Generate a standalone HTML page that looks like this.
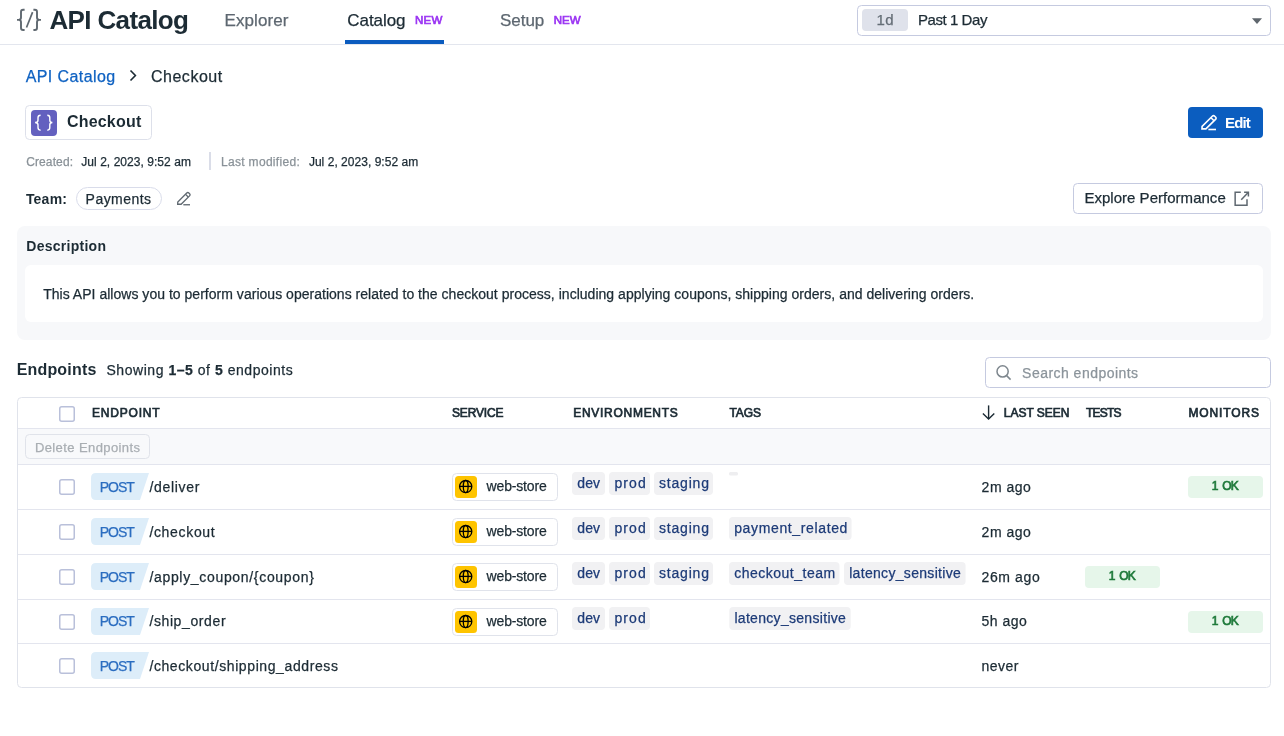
<!DOCTYPE html>
<html><head><meta charset="utf-8"><title>API Catalog - Checkout</title>
<style>
html,body{margin:0;padding:0;background:#fff;width:1284px;height:736px;overflow:hidden}
svg{display:block;font-family:"Liberation Sans",sans-serif;will-change:transform}
</style></head><body>
<svg width="1284" height="736" viewBox="0 0 1284 736">
<rect x="0" y="44" width="1284" height="1" fill="#e3e6ee"/>
<rect x="345" y="40" width="99" height="4" fill="#0b5cbf"/>
<g transform="translate(14,6)" fill="none" stroke="#5f6870" stroke-width="1.9" stroke-linecap="butt"><path d="M10.6,3.8 H9.1 C7.8,3.8 7,4.6 7,5.9 V11.6 C7,13.1 6.1,13.9 4.6,13.9 H3 M4.6,13.9 C6.1,13.9 7,14.7 7,16.2 V21.9 C7,23.2 7.8,24 9.1,24 H10.6"/><path d="M19.4,3.8 H20.9 C22.2,3.8 23,4.6 23,5.9 V11.6 C23,13.1 23.9,13.9 25.4,13.9 H27 M25.4,13.9 C23.9,13.9 23,14.7 23,16.2 V21.9 C23,23.2 22.2,24 20.9,24 H19.4"/><path d="M18.6,6.1 L12.5,21.5" stroke-width="1.7"/></g>
<rect x="857.5" y="5.5" width="413" height="30" rx="4" fill="#fff" stroke="#c5cae0"/>
<rect x="862" y="9" width="46" height="22" rx="4" fill="#dfe2eb"/>
<polygon points="1252,18.3 1262,18.3 1257,23.9" fill="#5f666d"/>
<polyline points="130.5,70.5 135.4,75.5 130.5,80.5" fill="none" stroke="#1c2b34" stroke-width="1.6"/>
<rect x="25.5" y="105.5" width="126" height="34" rx="4" fill="#fff" stroke="#dde0ea"/>
<rect x="31" y="110" width="26" height="26" rx="4" fill="#6360bf"/>
<g transform="translate(29,108)" fill="none" stroke="#fff" stroke-width="1.4"><path d="M11.6,7.3 C10,7.3 9,8.2 9,9.8 V12.2 C9,13.6 8,14.5 6.1,14.5 C8,14.5 9,15.4 9,16.8 V19.6 C9,21.2 10,22.2 11.6,22.2"/><path d="M18.3,7.3 C19.9,7.3 20.8,8.2 20.8,9.8 V12.2 C20.8,13.6 21.8,14.5 23.4,14.5 C21.8,14.5 20.8,15.4 20.8,16.8 V19.6 C20.8,21.2 19.9,22.2 18.3,22.2"/></g>
<rect x="1188" y="107" width="75" height="31" rx="4" fill="#0b5dbf"/>
<g transform="translate(1196,110) scale(1)" fill="none" stroke="#fff" stroke-width="1.6" stroke-linejoin="miter"><path d="M6,18.9 L6.1,16.4 L16.3,6.2 Q17.5,5 18.7,6.2 L19.5,7 Q20.7,8.2 19.5,9.4 L9.9,18.9 Z"/><path d="M15,7.7 L18,10.7"/><path d="M12.4,19.5 H20"/></g>
<rect x="209" y="152" width="2" height="18" fill="#dadde8"/>
<rect x="76.5" y="187.5" width="85" height="22" rx="11" fill="#fff" stroke="#d9dcea"/>
<g transform="translate(172.4,187.6) scale(0.88)" fill="none" stroke="#5f6870" stroke-width="1.5" stroke-linejoin="miter"><path d="M6,18.9 L6.1,16.4 L16.3,6.2 Q17.5,5 18.7,6.2 L19.5,7 Q20.7,8.2 19.5,9.4 L9.9,18.9 Z"/><path d="M15,7.7 L18,10.7"/><path d="M12.4,19.5 H20"/></g>
<rect x="1073.5" y="183.5" width="189" height="30" rx="4" fill="#fff" stroke="#c5cae0"/>
<g transform="translate(1230,187)" fill="none" stroke="#5f6870" stroke-width="1.5"><path d="M10.8,5.15 H5.15 V18.3 H17 V12.2"/><path d="M11.25,12.65 L18.2,5.4"/><path d="M14.1,5.15 H18.4 V9.4"/></g>
<rect x="17" y="226" width="1254" height="114" rx="8" fill="#f7f8fa"/>
<rect x="25" y="265" width="1238" height="57" rx="6" fill="#fff"/>
<rect x="985.5" y="357.5" width="285" height="30" rx="4" fill="#fff" stroke="#c5cae0"/>
<g transform="translate(992,361)" fill="none" stroke="#7e878e" stroke-width="1.5"><circle cx="10.6" cy="10.4" r="5.6"/><path d="M14.6,14.6 L18.6,18.6"/></g>
<rect x="17.5" y="397.5" width="1253" height="290" rx="4" fill="#fff" stroke="#e0e3eb"/>
<rect x="18" y="429" width="1252" height="35" fill="#f8f9fb"/>
<rect x="18" y="428" width="1252" height="1" fill="#e3e5ee"/>
<rect x="18" y="464" width="1252" height="1" fill="#e3e5ee"/>
<rect x="18" y="509" width="1252" height="1" fill="#e3e5ee"/>
<rect x="18" y="554" width="1252" height="1" fill="#e3e5ee"/>
<rect x="18" y="599" width="1252" height="1" fill="#e3e5ee"/>
<rect x="18" y="643" width="1252" height="1" fill="#e3e5ee"/>
<rect x="59.75" y="406.75" width="14.5" height="14.5" rx="2" fill="#fff" stroke="#b9c0da" stroke-width="1.5"/>
<rect x="25.5" y="434.5" width="124" height="24" rx="4" fill="#f8f9fb" stroke="#e0e3ea"/>
<g transform="translate(978,402)" fill="none" stroke="#1c2b34" stroke-width="1.4"><path d="M10.6,3.4 V17"/><path d="M4.9,11.4 L10.6,17.1 L16.3,11.4"/></g>
<rect x="59.75" y="479.75" width="14.5" height="14.5" rx="2" fill="#fff" stroke="#b9c0da" stroke-width="1.5"/>
<path d="M96,473 H149 L140,500 H96 Q91,500 91,495 V478 Q91,473 96,473 Z" fill="#ddedf9"/>
<rect x="452.5" y="473.5" width="105" height="27" rx="4" fill="#fff" stroke="#e0e3eb"/>
<rect x="455" y="476" width="22" height="22" rx="3.5" fill="#fec400"/>
<g fill="none" stroke="#000" stroke-width="1.3"><circle cx="465.7" cy="486.6" r="6.1"/><path d="M459.59999999999997,486.40000000000003 H471.8"/><ellipse cx="465.7" cy="486.6" rx="2.4" ry="6.1"/></g>
<rect x="572" y="472" width="33" height="23" rx="4" fill="#f1f1f3"/>
<rect x="609" y="472" width="41" height="23" rx="4" fill="#f1f1f3"/>
<rect x="654" y="472" width="59" height="23" rx="4" fill="#f1f1f3"/>
<rect x="729" y="472" width="9" height="3.5" rx="1.5" fill="#eeeef0"/>
<rect x="1188" y="476" width="75" height="22" rx="4" fill="#e6f6ea"/>
<rect x="59.75" y="524.75" width="14.5" height="14.5" rx="2" fill="#fff" stroke="#b9c0da" stroke-width="1.5"/>
<path d="M96,518 H149 L140,545 H96 Q91,545 91,540 V523 Q91,518 96,518 Z" fill="#ddedf9"/>
<rect x="452.5" y="518.5" width="105" height="27" rx="4" fill="#fff" stroke="#e0e3eb"/>
<rect x="455" y="521" width="22" height="22" rx="3.5" fill="#fec400"/>
<g fill="none" stroke="#000" stroke-width="1.3"><circle cx="465.7" cy="531.6" r="6.1"/><path d="M459.59999999999997,531.4 H471.8"/><ellipse cx="465.7" cy="531.6" rx="2.4" ry="6.1"/></g>
<rect x="572" y="517" width="33" height="23" rx="4" fill="#f1f1f3"/>
<rect x="609" y="517" width="41" height="23" rx="4" fill="#f1f1f3"/>
<rect x="654" y="517" width="59" height="23" rx="4" fill="#f1f1f3"/>
<rect x="729" y="517" width="122.6" height="23" rx="4" fill="#f1f1f3"/>
<rect x="59.75" y="569.75" width="14.5" height="14.5" rx="2" fill="#fff" stroke="#b9c0da" stroke-width="1.5"/>
<path d="M96,563 H149 L140,590 H96 Q91,590 91,585 V568 Q91,563 96,563 Z" fill="#ddedf9"/>
<rect x="452.5" y="563.5" width="105" height="27" rx="4" fill="#fff" stroke="#e0e3eb"/>
<rect x="455" y="566" width="22" height="22" rx="3.5" fill="#fec400"/>
<g fill="none" stroke="#000" stroke-width="1.3"><circle cx="465.7" cy="576.6" r="6.1"/><path d="M459.59999999999997,576.4 H471.8"/><ellipse cx="465.7" cy="576.6" rx="2.4" ry="6.1"/></g>
<rect x="572" y="562" width="33" height="23" rx="4" fill="#f1f1f3"/>
<rect x="609" y="562" width="41" height="23" rx="4" fill="#f1f1f3"/>
<rect x="654" y="562" width="59" height="23" rx="4" fill="#f1f1f3"/>
<rect x="729" y="562" width="110.5" height="23" rx="4" fill="#f1f1f3"/>
<rect x="844" y="562" width="121.6" height="23" rx="4" fill="#f1f1f3"/>
<rect x="1085" y="566" width="75" height="22" rx="4" fill="#e6f6ea"/>
<rect x="59.75" y="614.75" width="14.5" height="14.5" rx="2" fill="#fff" stroke="#b9c0da" stroke-width="1.5"/>
<path d="M96,608 H149 L140,635 H96 Q91,635 91,630 V613 Q91,608 96,608 Z" fill="#ddedf9"/>
<rect x="452.5" y="608.5" width="105" height="27" rx="4" fill="#fff" stroke="#e0e3eb"/>
<rect x="455" y="611" width="22" height="22" rx="3.5" fill="#fec400"/>
<g fill="none" stroke="#000" stroke-width="1.3"><circle cx="465.7" cy="621.6" r="6.1"/><path d="M459.59999999999997,621.4 H471.8"/><ellipse cx="465.7" cy="621.6" rx="2.4" ry="6.1"/></g>
<rect x="572" y="607" width="33" height="23" rx="4" fill="#f1f1f3"/>
<rect x="609" y="607" width="41" height="23" rx="4" fill="#f1f1f3"/>
<rect x="729.3" y="607" width="121.4" height="23" rx="4" fill="#f1f1f3"/>
<rect x="1188" y="611" width="75" height="22" rx="4" fill="#e6f6ea"/>
<rect x="59.75" y="658.75" width="14.5" height="14.5" rx="2" fill="#fff" stroke="#b9c0da" stroke-width="1.5"/>
<path d="M96,652 H149 L140,679 H96 Q91,679 91,674 V657 Q91,652 96,652 Z" fill="#ddedf9"/>
<text x="49.40" y="28.9" font-size="26" fill="#1c2b34" letter-spacing="-0.633"><tspan font-weight="bold">API Catalog</tspan></text>
<text x="224.50" y="26" font-size="17" fill="#5d6770" stroke="#5d6770" stroke-width="0.25" letter-spacing="0.080"><tspan>Explorer</tspan></text>
<text x="347.30" y="26" font-size="17" fill="#1c2b34" stroke="#1c2b34" stroke-width="0.25" letter-spacing="-0.057"><tspan>Catalog</tspan></text>
<text x="415.00" y="24" font-size="11.5" fill="#9b35f3" stroke="#9b35f3" stroke-width="0.7" letter-spacing="0.212"><tspan>NEW</tspan></text>
<text x="500.10" y="26" font-size="17" fill="#5d6770" stroke="#5d6770" stroke-width="0.25" letter-spacing="-0.068"><tspan>Setup</tspan></text>
<text x="553.80" y="24" font-size="11.5" fill="#9b35f3" stroke="#9b35f3" stroke-width="0.7" letter-spacing="0.012"><tspan>NEW</tspan></text>
<text x="876.50" y="25" font-size="15" fill="#646d76" stroke="#646d76" stroke-width="0.25" letter-spacing="0.358"><tspan>1d</tspan></text>
<text x="917.90" y="25" font-size="15" fill="#1c2b34" stroke="#1c2b34" stroke-width="0.25" letter-spacing="-0.430"><tspan>Past 1 Day</tspan></text>
<text x="25.70" y="82" font-size="16" fill="#0f62c2" stroke="#0f62c2" stroke-width="0.25" letter-spacing="0.402"><tspan>API Catalog</tspan></text>
<text x="151.00" y="82" font-size="16" fill="#1c2b34" stroke="#1c2b34" stroke-width="0.25" letter-spacing="0.507"><tspan>Checkout</tspan></text>
<text x="66.90" y="127.3" font-size="16" fill="#1c2b34" letter-spacing="0.204"><tspan font-weight="bold">Checkout</tspan></text>
<text x="1225.00" y="128" font-size="15" fill="#ffffff" letter-spacing="-0.878"><tspan font-weight="bold">Edit</tspan></text>
<text x="26.20" y="166" font-size="12" fill="#8a9298" stroke="#8a9298" stroke-width="0.25" letter-spacing="0.116"><tspan>Created:</tspan></text>
<text x="81.30" y="166" font-size="12" fill="#1c2b34" stroke="#1c2b34" stroke-width="0.25" letter-spacing="0.045"><tspan>Jul 2, 2023, 9:52 am</tspan></text>
<text x="221.10" y="166" font-size="12" fill="#8a9298" stroke="#8a9298" stroke-width="0.25" letter-spacing="0.302"><tspan>Last modified:</tspan></text>
<text x="308.90" y="166" font-size="12" fill="#1c2b34" stroke="#1c2b34" stroke-width="0.25" letter-spacing="0.029"><tspan>Jul 2, 2023, 9:52 am</tspan></text>
<text x="25.90" y="204" font-size="14" fill="#1c2b34" letter-spacing="0.217"><tspan font-weight="bold">Team:</tspan></text>
<text x="85.60" y="204" font-size="14" fill="#1c2b34" stroke="#1c2b34" stroke-width="0.25" letter-spacing="0.465"><tspan>Payments</tspan></text>
<text x="1084.40" y="203.3" font-size="15" fill="#1c2b34" stroke="#1c2b34" stroke-width="0.25" letter-spacing="0.025"><tspan>Explore Performance</tspan></text>
<text x="26.30" y="251.3" font-size="14" fill="#1c2b34" letter-spacing="0.264"><tspan font-weight="bold">Description</tspan></text>
<text x="43.20" y="299" font-size="14" fill="#1c2b34" stroke="#1c2b34" stroke-width="0.25" letter-spacing="0.023"><tspan>This API allows you to perform various operations related to the checkout process, including applying coupons, shipping orders, and delivering orders.</tspan></text>
<text x="16.70" y="374.5" font-size="16" fill="#1c2b34" letter-spacing="0.173"><tspan font-weight="bold">Endpoints</tspan></text>
<text x="106.50" y="374.5" font-size="14" fill="#1c2b34" stroke="#1c2b34" stroke-width="0.25" letter-spacing="0.536"><tspan>Showing </tspan><tspan font-weight="bold">1–5</tspan><tspan> of </tspan><tspan font-weight="bold">5</tspan><tspan> endpoints</tspan></text>
<text x="1022.10" y="378" font-size="14" fill="#8b949b" stroke="#8b949b" stroke-width="0.25" letter-spacing="0.469"><tspan>Search endpoints</tspan></text>
<text x="92.10" y="417" font-size="12" fill="#1c2b34" stroke="#1c2b34" stroke-width="0.7" letter-spacing="0.775"><tspan>ENDPOINT</tspan></text>
<text x="451.90" y="417" font-size="12" fill="#1c2b34" stroke="#1c2b34" stroke-width="0.7" letter-spacing="-0.127"><tspan>SERVICE</tspan></text>
<text x="573.20" y="417" font-size="12" fill="#1c2b34" stroke="#1c2b34" stroke-width="0.7" letter-spacing="0.721"><tspan>ENVIRONMENTS</tspan></text>
<text x="729.50" y="417" font-size="12" fill="#1c2b34" stroke="#1c2b34" stroke-width="0.7" letter-spacing="-0.092"><tspan>TAGS</tspan></text>
<text x="1003.80" y="417" font-size="12" fill="#1c2b34" stroke="#1c2b34" stroke-width="0.7" letter-spacing="-0.020"><tspan>LAST SEEN</tspan></text>
<text x="1085.90" y="417" font-size="12" fill="#1c2b34" stroke="#1c2b34" stroke-width="0.7" letter-spacing="-0.742"><tspan>TESTS</tspan></text>
<text x="1188.50" y="417" font-size="12" fill="#1c2b34" stroke="#1c2b34" stroke-width="0.7" letter-spacing="0.865"><tspan>MONITORS</tspan></text>
<text x="34.90" y="452" font-size="13" fill="#a9aeb3" stroke="#a9aeb3" stroke-width="0.25" letter-spacing="0.406"><tspan>Delete Endpoints</tspan></text>
<text x="99.70" y="492" font-size="14" fill="#2b6dc0" stroke="#2b6dc0" stroke-width="0.25" letter-spacing="-0.988"><tspan>POST</tspan></text>
<text x="149.40" y="492" font-size="14" fill="#1c2b34" stroke="#1c2b34" stroke-width="0.25" letter-spacing="0.690"><tspan>/deliver</tspan></text>
<text x="981.60" y="492" font-size="14" fill="#1c2b34" stroke="#1c2b34" stroke-width="0.25" letter-spacing="0.498"><tspan>2m ago</tspan></text>
<text x="486.60" y="491" font-size="14" fill="#1c2b34" stroke="#1c2b34" stroke-width="0.25" letter-spacing="-0.173"><tspan>web-store</tspan></text>
<text x="577.30" y="487.6" font-size="14" fill="#1d3b78" stroke="#1d3b78" stroke-width="0.25" letter-spacing="0.064"><tspan>dev</tspan></text>
<text x="614.50" y="487.6" font-size="14" fill="#1d3b78" stroke="#1d3b78" stroke-width="0.25" letter-spacing="1.055"><tspan>prod</tspan></text>
<text x="659.00" y="487.6" font-size="14" fill="#1d3b78" stroke="#1d3b78" stroke-width="0.25" letter-spacing="0.807"><tspan>staging</tspan></text>
<text x="1211.70" y="489.8" font-size="12" fill="#1f7a3b" stroke="#1f7a3b" stroke-width="0.7" letter-spacing="0.000"><tspan>1</tspan></text>
<text x="1222.20" y="489.8" font-size="12" fill="#1f7a3b" stroke="#1f7a3b" stroke-width="0.7" letter-spacing="-0.834"><tspan>OK</tspan></text>
<text x="99.70" y="537" font-size="14" fill="#2b6dc0" stroke="#2b6dc0" stroke-width="0.25" letter-spacing="-0.988"><tspan>POST</tspan></text>
<text x="149.40" y="537" font-size="14" fill="#1c2b34" stroke="#1c2b34" stroke-width="0.25" letter-spacing="0.671"><tspan>/checkout</tspan></text>
<text x="981.60" y="537" font-size="14" fill="#1c2b34" stroke="#1c2b34" stroke-width="0.25" letter-spacing="0.498"><tspan>2m ago</tspan></text>
<text x="486.60" y="536" font-size="14" fill="#1c2b34" stroke="#1c2b34" stroke-width="0.25" letter-spacing="-0.173"><tspan>web-store</tspan></text>
<text x="577.30" y="532.6" font-size="14" fill="#1d3b78" stroke="#1d3b78" stroke-width="0.25" letter-spacing="0.064"><tspan>dev</tspan></text>
<text x="614.50" y="532.6" font-size="14" fill="#1d3b78" stroke="#1d3b78" stroke-width="0.25" letter-spacing="1.055"><tspan>prod</tspan></text>
<text x="659.00" y="532.6" font-size="14" fill="#1d3b78" stroke="#1d3b78" stroke-width="0.25" letter-spacing="0.807"><tspan>staging</tspan></text>
<text x="734.20" y="532.6" font-size="14" fill="#1d3b78" stroke="#1d3b78" stroke-width="0.25" letter-spacing="0.636"><tspan>payment_related</tspan></text>
<text x="99.70" y="582" font-size="14" fill="#2b6dc0" stroke="#2b6dc0" stroke-width="0.25" letter-spacing="-0.988"><tspan>POST</tspan></text>
<text x="149.40" y="582" font-size="14" fill="#1c2b34" stroke="#1c2b34" stroke-width="0.25" letter-spacing="0.678"><tspan>/apply_coupon/{coupon}</tspan></text>
<text x="981.60" y="582" font-size="14" fill="#1c2b34" stroke="#1c2b34" stroke-width="0.25" letter-spacing="0.601"><tspan>26m ago</tspan></text>
<text x="486.60" y="581" font-size="14" fill="#1c2b34" stroke="#1c2b34" stroke-width="0.25" letter-spacing="-0.173"><tspan>web-store</tspan></text>
<text x="577.30" y="577.6" font-size="14" fill="#1d3b78" stroke="#1d3b78" stroke-width="0.25" letter-spacing="0.064"><tspan>dev</tspan></text>
<text x="614.50" y="577.6" font-size="14" fill="#1d3b78" stroke="#1d3b78" stroke-width="0.25" letter-spacing="1.055"><tspan>prod</tspan></text>
<text x="659.00" y="577.6" font-size="14" fill="#1d3b78" stroke="#1d3b78" stroke-width="0.25" letter-spacing="0.807"><tspan>staging</tspan></text>
<text x="734.20" y="577.6" font-size="14" fill="#1d3b78" stroke="#1d3b78" stroke-width="0.25" letter-spacing="0.501"><tspan>checkout_team</tspan></text>
<text x="849.20" y="577.6" font-size="14" fill="#1d3b78" stroke="#1d3b78" stroke-width="0.25" letter-spacing="0.311"><tspan>latency_sensitive</tspan></text>
<text x="1108.70" y="579.8" font-size="12" fill="#1f7a3b" stroke="#1f7a3b" stroke-width="0.7" letter-spacing="0.000"><tspan>1</tspan></text>
<text x="1119.20" y="579.8" font-size="12" fill="#1f7a3b" stroke="#1f7a3b" stroke-width="0.7" letter-spacing="-0.834"><tspan>OK</tspan></text>
<text x="99.70" y="626" font-size="14" fill="#2b6dc0" stroke="#2b6dc0" stroke-width="0.25" letter-spacing="-0.988"><tspan>POST</tspan></text>
<text x="149.40" y="626" font-size="14" fill="#1c2b34" stroke="#1c2b34" stroke-width="0.25" letter-spacing="0.612"><tspan>/ship_order</tspan></text>
<text x="981.60" y="626" font-size="14" fill="#1c2b34" stroke="#1c2b34" stroke-width="0.25" letter-spacing="0.453"><tspan>5h ago</tspan></text>
<text x="486.60" y="626" font-size="14" fill="#1c2b34" stroke="#1c2b34" stroke-width="0.25" letter-spacing="-0.173"><tspan>web-store</tspan></text>
<text x="577.30" y="622.6" font-size="14" fill="#1d3b78" stroke="#1d3b78" stroke-width="0.25" letter-spacing="0.064"><tspan>dev</tspan></text>
<text x="614.50" y="622.6" font-size="14" fill="#1d3b78" stroke="#1d3b78" stroke-width="0.25" letter-spacing="1.055"><tspan>prod</tspan></text>
<text x="734.40" y="622.6" font-size="14" fill="#1d3b78" stroke="#1d3b78" stroke-width="0.25" letter-spacing="0.305"><tspan>latency_sensitive</tspan></text>
<text x="1211.70" y="624.8" font-size="12" fill="#1f7a3b" stroke="#1f7a3b" stroke-width="0.7" letter-spacing="0.000"><tspan>1</tspan></text>
<text x="1222.20" y="624.8" font-size="12" fill="#1f7a3b" stroke="#1f7a3b" stroke-width="0.7" letter-spacing="-0.834"><tspan>OK</tspan></text>
<text x="99.70" y="671" font-size="14" fill="#2b6dc0" stroke="#2b6dc0" stroke-width="0.25" letter-spacing="-0.988"><tspan>POST</tspan></text>
<text x="149.40" y="671" font-size="14" fill="#1c2b34" stroke="#1c2b34" stroke-width="0.25" letter-spacing="0.598"><tspan>/checkout/shipping_address</tspan></text>
<text x="981.60" y="671" font-size="14" fill="#1c2b34" stroke="#1c2b34" stroke-width="0.25" letter-spacing="0.460"><tspan>never</tspan></text>
</svg>
</body></html>
